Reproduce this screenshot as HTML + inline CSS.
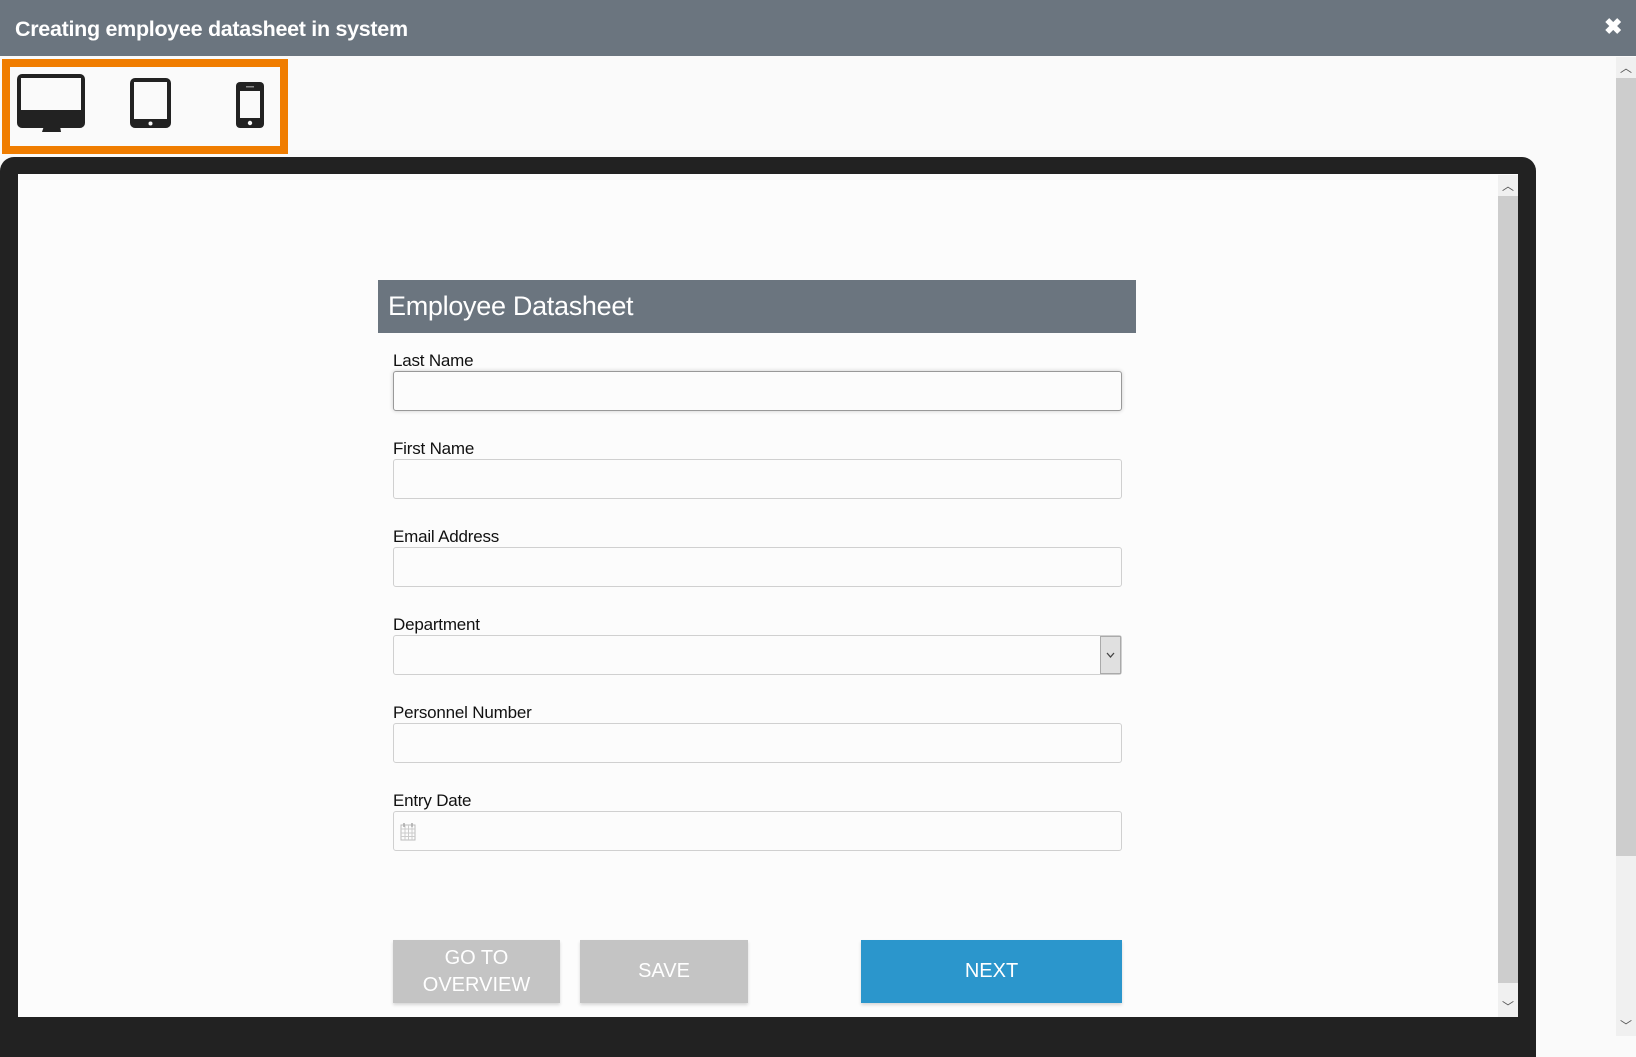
<!DOCTYPE html>
<html><head><meta charset="utf-8"><style>
*{box-sizing:border-box;margin:0;padding:0}
body{width:1636px;height:1036px;overflow:hidden;background:#fafafa;font-family:"Liberation Sans",sans-serif;position:relative}
.hdr{position:absolute;left:0;top:0;width:1636px;height:56px;background:#6b757f;color:#fff}
.hdr .t{position:absolute;left:15px;top:17px;font-size:21.5px;font-weight:bold;letter-spacing:-0.3px}
.hdr .x{position:absolute;left:1604px;top:14px;font-size:22px;font-weight:bold}
.obox{position:absolute;left:2px;top:59px;width:286px;height:95px;border:8px solid #f07d00}
.sb{position:absolute;background:#f0f0f0}
.sb .th{position:absolute;left:0;right:0;background:#cdcdcd}
.sb .ar{position:absolute;left:0;right:0;text-align:center;color:#555;font-size:12px}
.frame{position:absolute;left:0;top:157px;width:1536px;height:900px;background:#222;border-radius:14px 14px 0 0}
.inner{position:absolute;left:18px;top:174px;width:1500px;height:843px;background:#fcfcfc}
.fh{position:absolute;left:378px;top:280px;width:758px;height:53px;background:#6b757f;color:#fff;font-size:27px;padding:11px 10px;letter-spacing:-0.3px}
.lb{position:absolute;left:393px;font-size:17px;color:#111;letter-spacing:-0.2px}
.in{position:absolute;left:393px;width:729px;height:40px;border:1px solid #d0d0d0;border-radius:3px;background:#fcfcfc}
.btn{position:absolute;top:940px;height:63px;color:#fff;font-size:20px;text-align:center;display:flex;align-items:center;justify-content:center;line-height:27px;box-shadow:0 2px 3px rgba(0,0,0,.15)}
</style></head><body>
<div class="hdr"><div class="t">Creating employee datasheet in system</div><div class="x">✖</div></div>
<div class="obox"></div>
<svg style="position:absolute;left:0;top:0" width="300" height="150">
<rect x="17" y="74" width="68" height="54" rx="5" fill="#222"/>
<rect x="21" y="78" width="60" height="32" fill="#fafafa"/>
<path d="M44 126 L60 126 L61 132 L42 132 Z" fill="#222"/>
<rect x="130" y="78" width="41" height="50" rx="5" fill="#222"/>
<rect x="134" y="82" width="33" height="37" fill="#fafafa"/>
<circle cx="150.5" cy="123.5" r="2" fill="#fafafa"/>
<rect x="236" y="82" width="28" height="46" rx="4" fill="#222"/>
<rect x="240" y="91" width="20" height="27" fill="#fafafa"/>
<rect x="246" y="86" width="8" height="1.5" fill="#888"/>
<circle cx="250" cy="123" r="2.2" fill="#fafafa"/>
</svg>
<div class="sb" style="left:1616px;top:57px;width:20px;height:979px"><div class="ar" style="top:2px">︿</div><div class="th" style="top:21px;height:778px"></div><div class="ar" style="bottom:2px">﹀</div></div>
<div class="frame"></div>
<div class="inner"></div>
<div class="sb" style="left:1498px;top:175px;width:20px;height:842px"><div class="ar" style="top:2px">︿</div><div class="th" style="top:21px;height:787px"></div><div class="ar" style="bottom:2px">﹀</div></div>
<div class="fh">Employee Datasheet</div>
<div class="lb" style="top:351px">Last Name</div>
<div class="in" style="top:371px;border-color:#999;box-shadow:0 0 4px rgba(0,0,0,.2)"></div>
<div class="lb" style="top:439px">First Name</div>
<div class="in" style="top:459px"></div>
<div class="lb" style="top:527px">Email Address</div>
<div class="in" style="top:547px"></div>
<div class="lb" style="top:615px">Department</div>
<div class="in" style="top:635px"><div style="position:absolute;right:0;top:0;width:21px;height:38px;background:#e0e0e0;border:1px solid #aaa"><svg width="19" height="36" style="position:absolute;left:0;top:0"><path d="M6 16 L9.5 20 L13 16" stroke="#444" stroke-width="1.3" fill="none"/></svg></div></div>
<div class="lb" style="top:703px">Personnel Number</div>
<div class="in" style="top:723px"></div>
<div class="lb" style="top:791px">Entry Date</div>
<div class="in" style="top:811px"><svg width="18" height="20" style="position:absolute;left:6px;top:10px"><rect x="1" y="3" width="14" height="15" fill="none" stroke="#bbb"/><path d="M1 7H15M1 11H15M1 14.5H15M5 3V18M8.5 3V18M12 3V18" stroke="#ccc"/><path d="M4 1V5M12 1V5" stroke="#aaa" stroke-width="1.5"/></svg></div>
<div class="btn" style="left:393px;width:167px;background:#c4c4c4">GO TO<br>OVERVIEW</div>
<div class="btn" style="left:580px;width:168px;background:#c4c4c4">SAVE</div>
<div class="btn" style="left:861px;width:261px;background:#2b96cc">NEXT</div>
</body></html>
